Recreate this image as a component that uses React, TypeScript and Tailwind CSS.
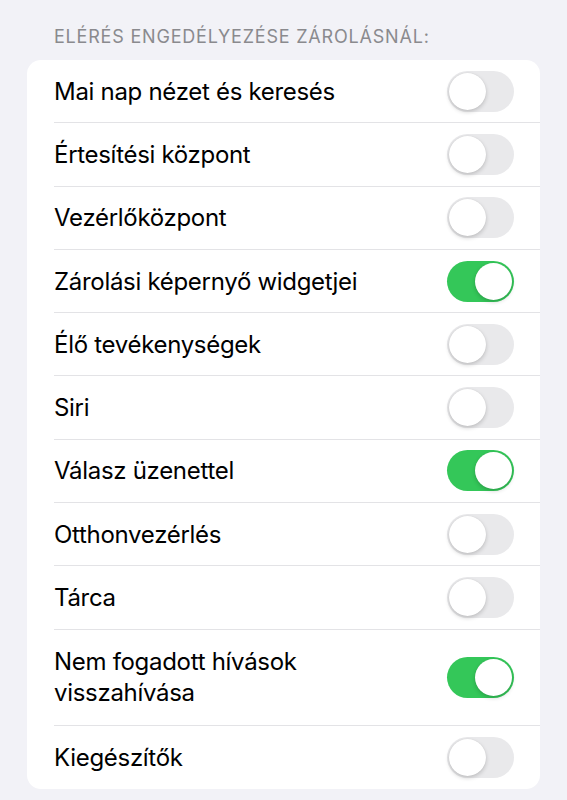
import React from "react"

const rows: { label: string; on: boolean; wide?: boolean }[] = [
  { label: "Mai nap nézet és keresés", on: false },
  { label: "Értesítési központ", on: false },
  { label: "Vezérlőközpont", on: false },
  { label: "Zárolási képernyő widgetjei", on: true },
  { label: "Élő tevékenységek", on: false },
  { label: "Siri", on: false },
  { label: "Válasz üzenettel", on: true },
  { label: "Otthonvezérlés", on: false },
  { label: "Tárca", on: false },
  { label: "Nem fogadott hívások visszahívása", on: true, wide: true },
  { label: "Kiegészítők", on: false },
]

function Toggle({ on }: { on: boolean }) {
  return (
    <div
      className={
        on
          ? "w-[67px] h-[41px] rounded-full p-[2px] flex justify-end bg-[#34c759] shrink-0"
          : "w-[67px] h-[41px] rounded-full p-[2px] flex justify-start bg-[#e9e9eb] shrink-0"
      }
    >
      <div className="w-[37px] h-[37px] rounded-full bg-white shadow-[0_2px_4px_rgba(0,0,0,0.18),0_0_1px_rgba(0,0,0,0.12)]" />
    </div>
  )
}

export default function App() {
  return (
    <div className="min-h-[800px] bg-[#f2f2f7] pt-[26px] font-['Inter',sans-serif]">
      <div className="px-[54px] mb-[12px] text-[18px] leading-[22px] tracking-[0.8px] text-[#8a8a8e] uppercase">
        Elérés engedélyezése zárolásnál:
      </div>

      <div className="mx-[27px] rounded-[14px] bg-white overflow-hidden">
        {rows.map((row, i) => (
          <div key={row.label} className="pl-[27px]">
            <div
              className={
                i === rows.length - 1
                  ? "flex items-center justify-between pr-[26px] min-h-[63.3px]"
                  : "flex items-center justify-between pr-[26px] min-h-[63.3px] border-b border-[#e3e3e6]"
              }
            >
              <span
                className={
                  row.wide
                    ? "text-[24px] leading-[31px] tracking-[-0.3px] text-black max-w-[300px] py-[16.5px]"
                    : "text-[24px] leading-[31px] tracking-[-0.3px] text-black"
                }
              >
                {row.label}
              </span>
              <Toggle on={row.on} />
            </div>
          </div>
        ))}
      </div>
    </div>
  )
}
